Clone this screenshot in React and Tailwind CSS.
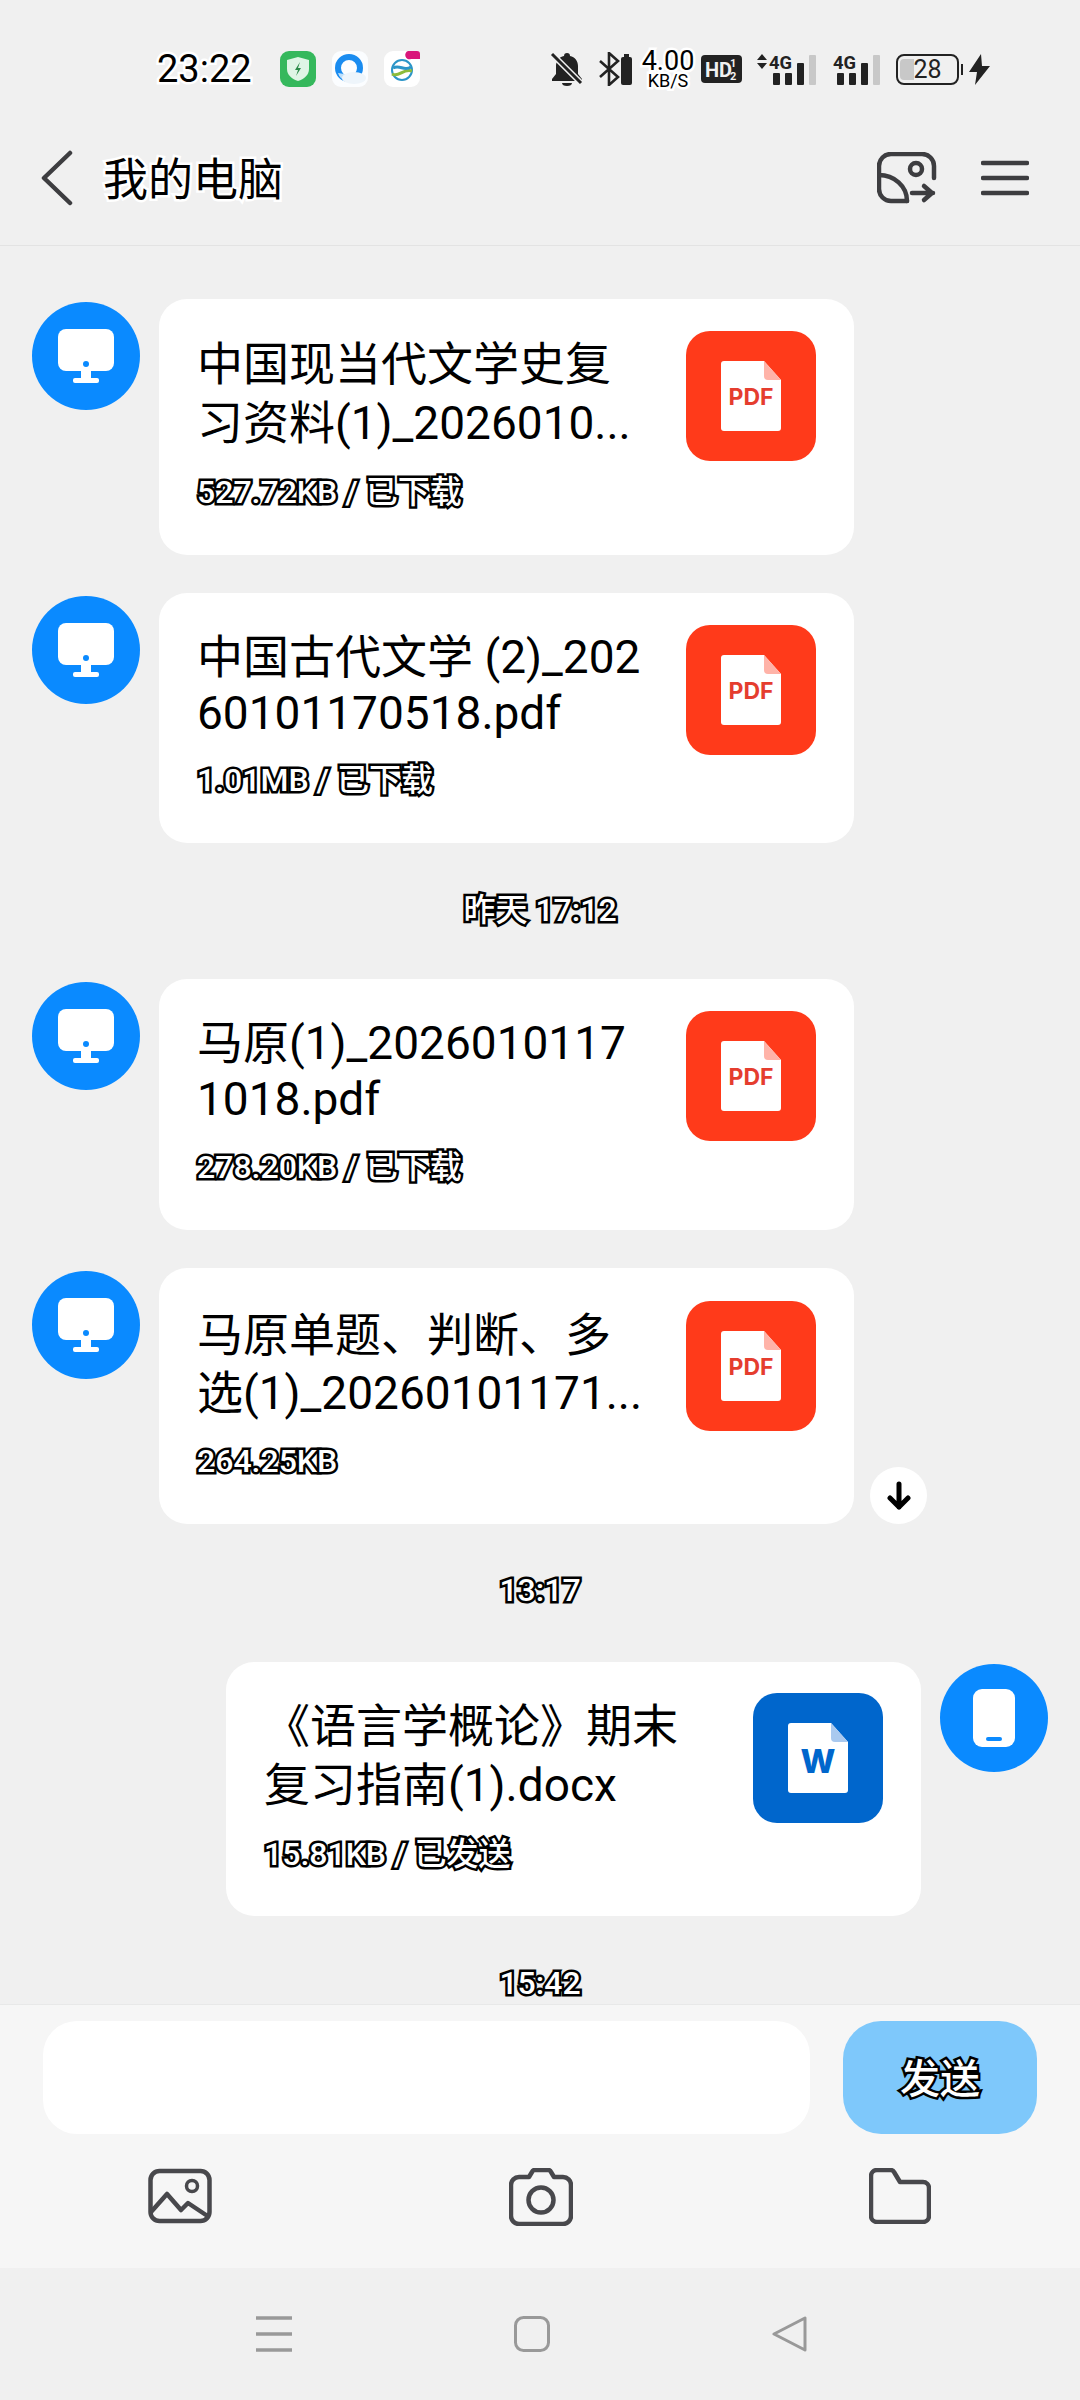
import React from 'react';

const FONT = "font-['Roboto','Noto_Sans_CJK_SC',sans-serif]";
const OUTLINE = "font-medium text-white [-webkit-text-stroke:5px_#000] [paint-order:stroke_fill]";
const HALO = "text-black [-webkit-text-stroke:5px_#fff] [paint-order:stroke_fill]";

function BellOff() {
    return (
        <svg width="34" height="36" viewBox="0 0 34 36">
            <path d="M17 2c2 0 3 1 3 3 5 1 8 5 8 10v8l4 5v2H2v-2l4-5v-8c0-5 3-9 8-10 0-2 1-3 3-3z" fill="#222" />
            <path d="M12 32h10c0 2-2 3-5 3s-5-1-5-3z" fill="#222" />
            <path d="M2 3l29 29" stroke="#f0f0f0" strokeWidth="6" />
            <path d="M2 3l29 29" stroke="#222" strokeWidth="3" />
        </svg>
    );
}

function BluetoothBattery() {
    return (
        <svg width="34" height="34" viewBox="0 0 34 34">
            <path d="M2 9l18 16-9 8V1l9 8L2 25" fill="none" stroke="#222" strokeWidth="2.6" />
            <rect x="23" y="5" width="11" height="28" rx="2" fill="#222" />
            <rect x="26" y="2" width="5" height="3" fill="#222" />
        </svg>
    );
}

function HdIcon() {
    return (
        <svg width="41" height="28" viewBox="0 0 41 28">
            <rect width="41" height="28" rx="4" fill="#222" />
            <text x="4" y="22" fontFamily="Roboto" fontWeight="700" fontSize="20" fill="#f0f0f0">HD</text>
            <text x="29" y="12" fontFamily="Roboto" fontWeight="700" fontSize="11" fill="#f0f0f0">1</text>
            <text x="29" y="25" fontFamily="Roboto" fontWeight="700" fontSize="11" fill="#f0f0f0">2</text>
        </svg>
    );
}

function SignalIcon({ arrows }) {
    return (
        <svg width={arrows ? 60 : 47} height="32" viewBox={arrows ? '0 0 60 32' : '13 0 47 32'}>
            {arrows && <path d="M1 7l5-6 5 6zM1 10l5 6 5-6z" fill="#222" />}
            <text x="13" y="16" fontFamily="Roboto" fontWeight="700" fontSize="18" fill="#222" textLength="23" lengthAdjust="spacingAndGlyphs">4G</text>
            <rect x="17" y="20" width="7" height="12" rx="1" fill="#222" />
            <rect x="29" y="20" width="7" height="12" rx="1" fill="#222" />
            <rect x="41" y="10" width="7" height="22" rx="1" fill="#222" />
            <rect x="53" y="2" width="7" height="30" rx="1" fill="#c8c8c8" />
        </svg>
    );
}

function BatteryIcon() {
    return (
        <div className="relative w-[68px] h-[31px]">
            <div className="absolute left-0 top-0 w-[63px] h-[31px] rounded-[8px] border-2 border-[#222] overflow-hidden flex items-center">
                <div className="w-[14px] h-[21px] bg-[#c8c8c8] ml-[2px] rounded-l-[4px]" />
            </div>
            <div className="absolute left-[65px] top-[10px] w-[2px] h-[11px] bg-[#222]" />
            <div className={`absolute left-0 w-[63px] top-0 h-[31px] flex items-center justify-center text-[25px] leading-none text-[#222] ${FONT}`}>28</div>
        </div>
    );
}

function Bolt() {
    return (
        <svg width="21" height="31" viewBox="0 0 21 31">
            <path d="M12 0L0 18h8L6 31 21 12h-8z" fill="#222" />
        </svg>
    );
}

function ShieldApp() {
    return (
        <svg width="36" height="36" viewBox="0 0 36 36">
            <rect width="36" height="36" rx="9" fill="#35b85c" />
            <path d="M18 6l11 3v9c0 6-5 10-11 12-6-2-11-6-11-12V9z" fill="#dff5e5" />
            <path d="M20 11l-5 8h3l-2 6 5-8h-3z" fill="#2a8a48" />
        </svg>
    );
}

function BrowserApp() {
    return (
        <svg width="36" height="36" viewBox="0 0 36 36">
            <rect width="36" height="36" rx="9" fill="#fbfdff" />
            <circle cx="17" cy="17" r="11" fill="none" stroke="#1a8cf0" strokeWidth="6" />
            <path d="M6 22a12 12 0 0 0 8 8l4-6z" fill="#bfe0fa" />
            <ellipse cx="22" cy="27" rx="12" ry="6" fill="#eef5fb" />
        </svg>
    );
}

function MobileApp() {
    return (
        <svg width="36" height="36" viewBox="0 0 36 36">
            <rect width="36" height="36" rx="9" fill="#fff" />
            <circle cx="18" cy="19" r="10" fill="none" stroke="#2b95c8" strokeWidth="2" />
            <path d="M8 23c7 4 11-6 20-3" fill="none" stroke="#8cbb3a" strokeWidth="3" />
            <path d="M9 17c7-4 11 4 18-1" fill="none" stroke="#2b95c8" strokeWidth="3" />
            <path d="M24 0h9a3 3 0 0 1 3 3v5H27a4 4 0 0 1-3-8z" fill="#d9167a" />
        </svg>
    );
}

function StatusBar() {
    return (
        <div className={`h-[120px] pt-[18px] pl-[157px] flex items-center ${FONT}`}>
            <span className={`text-[38px] leading-none w-[93px] ${HALO}`}>23:22</span>
            <div className="ml-[30px] flex gap-[16px]">
                <ShieldApp />
                <BrowserApp />
                <MobileApp />
            </div>
            <div className="ml-[130px]"><BellOff /></div>
            <div className="ml-[14px]"><BluetoothBattery /></div>
            <div className="ml-[9px] w-[54px] flex flex-col items-center">
                <span className={`text-[27px] leading-[23px] ${HALO} [-webkit-text-stroke:3px_#fff]`}>4.00</span>
                <span className={`text-[18px] leading-[16px] ${HALO} [-webkit-text-stroke:3px_#fff]`}>KB/S</span>
            </div>
            <div className="ml-[6px]"><HdIcon /></div>
            <div className="ml-[14px]"><SignalIcon arrows /></div>
            <div className="ml-[17px]"><SignalIcon /></div>
            <div className="ml-[16px]"><BatteryIcon /></div>
            <div className="ml-[5px]"><Bolt /></div>
        </div>
    );
}

function NavBar() {
    return (
        <div className="h-[126px] pb-[10px] border-b border-[#e3e3e3] flex items-center">
            <svg className="ml-[40px]" width="34" height="56" viewBox="0 0 34 56">
                <path d="M30 3L4 28l26 25" fill="none" stroke="#3d3d40" strokeWidth="4.5" strokeLinecap="round" strokeLinejoin="round" />
            </svg>
            <span className={`ml-[29px] mt-[5px] text-[45px] leading-none ${HALO} ${FONT}`}>我的电脑</span>
            <svg className="ml-auto" width="60" height="52" viewBox="0 0 60 52" fill="none" stroke="#3d3d40" strokeWidth="4.5" strokeLinecap="round">
                <path d="M57 26V14a12 12 0 0 0-12-12H14A12 12 0 0 0 2 14v23a12 12 0 0 0 12 12h16" />
                <path d="M2 23c15 0 28 11 28 26" />
                <circle cx="39" cy="17" r="6" />
                <path d="M35 41h21M47 34l8 7-8 7" strokeLinejoin="round" />
            </svg>
            <svg className="ml-[44px] mr-[51px]" width="48" height="36" viewBox="0 0 48 36" stroke="#3d3d40" strokeWidth="4.5" strokeLinecap="round">
                <path d="M2 3h44M2 18h44M2 33h44" />
            </svg>
        </div>
    );
}

function FileIcon({ type }) {
    const isPdf = type === 'pdf';
    return (
        <div className={`w-[130px] h-[130px] shrink-0 rounded-[24px] flex items-center justify-center ${isPdf ? 'bg-[#ff3a1a]' : 'bg-[#0066cc]'}`}>
            <svg width="60" height="70" viewBox="0 0 60 70">
                <path d="M3 0h40l17 19v48a3 3 0 0 1-3 3H3a3 3 0 0 1-3-3V3a3 3 0 0 1 3-3z" fill="#fff" />
                <path d="M43 0l17 19H47a4 4 0 0 1-4-4z" fill={isPdf ? '#ffb3a8' : '#a9c9ef'} />
                {isPdf ? (
                    <text x="30" y="44" textAnchor="middle" fontFamily="Inter" fontWeight="700" fontSize="23" fill="#e53d2f">PDF</text>
                ) : (
                    <text x="30" y="50" textAnchor="middle" fontFamily="Inter" fontWeight="800" fontSize="33" fill="#0066cc">W</text>
                )}
            </svg>
        </div>
    );
}

function PcAvatar() {
    return (
        <div className="w-[108px] h-[108px] mt-[3px] shrink-0 rounded-full bg-[#0a8aff] flex items-center justify-center">
            <svg width="56" height="54" viewBox="0 0 56 54">
                <rect width="56" height="42" rx="8" fill="#fff" />
                <circle cx="28" cy="35" r="3" fill="#0a8aff" />
                <rect x="23" y="42" width="10" height="8" fill="#fff" />
                <rect x="15" y="49" width="26" height="5" rx="2" fill="#fff" />
            </svg>
        </div>
    );
}

function PhoneAvatar() {
    return (
        <div className="w-[108px] h-[108px] mt-[2px] shrink-0 rounded-full bg-[#0a8aff] flex items-center justify-center">
            <svg width="42" height="58" viewBox="0 0 42 58">
                <rect width="42" height="58" rx="9" fill="#fff" />
                <rect x="13" y="48" width="16" height="4" rx="2" fill="#0a8aff" />
            </svg>
        </div>
    );
}

function FileCard({ file }) {
    return (
        <div className={`w-[695px] rounded-[28px] bg-white flex justify-between pl-[38px] pr-[38px] ${file.pad}`}>
            <div className={`min-w-0 ${FONT} whitespace-nowrap ${file.textTop}`}>
                <div className={`text-[46px] text-black ${file.lh1}`}>{file.line1}</div>
                <div className={`text-[46px] text-black ${file.lh2}`}>{file.line2}</div>
                <div className={`text-[32px] leading-[40px] ${OUTLINE} ${file.subTop}`}>{file.sub}</div>
            </div>
            <FileIcon type={file.type} />
        </div>
    );
}

function TimeLabel({ className, children }) {
    return (
        <div className={`flex justify-center text-[32px] leading-[40px] ${OUTLINE} ${FONT} ${className}`}>
            {children}
        </div>
    );
}

const files = [
    { line1: '中国现当代文学史复', line2: '习资料(1)_2026010...', sub: '527.72KB / 已下载', type: 'pdf', lh1: 'leading-[57px]', lh2: 'leading-[60px]', pad: 'pt-[32px] h-[256px]', textTop: 'mt-[5px]', subTop: 'mt-[19px]' },
    { line1: '中国古代文学 (2)_202', line2: '60101170518.pdf', sub: '1.01MB / 已下载', type: 'pdf', lh1: 'leading-[58px]', lh2: 'leading-[55px]', pad: 'pt-[32px] h-[250px]', textTop: 'mt-[3px]', subTop: 'mt-[19px]' },
    { line1: '马原(1)_2026010117', line2: '1018.pdf', sub: '278.20KB / 已下载', type: 'pdf', lh1: 'leading-[57px]', lh2: 'leading-[55px]', pad: 'pt-[32px] h-[251px]', textTop: 'mt-[4px]', subTop: 'mt-[20px]' },
    { line1: '马原单题、判断、多', line2: '选(1)_20260101171...', sub: '264.25KB', type: 'pdf', lh1: 'leading-[57px]', lh2: 'leading-[58px]', pad: 'pt-[33px] h-[256px]', textTop: 'mt-[6px]', subTop: 'mt-[19px]' },
];

function InputBar() {
    return (
        <div className="h-[264px] bg-[#f6f6f6] border-t border-[#e8e8e8] px-[43px] pt-[16px]">
            <div className="flex gap-[33px]">
                <div className="w-[767px] h-[113px] rounded-[34px] bg-white" />
                <div className={`w-[194px] h-[113px] rounded-[38px] bg-[#7ec8fb] flex items-center justify-center text-[40px] pt-[4px] ${OUTLINE} ${FONT}`}>发送</div>
            </div>
            <div className="mt-[34px] flex justify-between pl-[105px] pr-[106px]">
                <svg width="64" height="56" viewBox="0 0 64 56" fill="none" stroke="#48484c" strokeWidth="4.5" strokeLinejoin="round">
                    <rect x="2.5" y="3" width="59" height="50" rx="9" />
                    <path d="M3 44l16-18 14 16 7-7 21 14" />
                    <circle cx="44" cy="18" r="5.5" strokeWidth="3.5" />
                </svg>
                <svg width="64" height="58" viewBox="0 0 64 58" fill="none" stroke="#48484c" strokeWidth="4.5" strokeLinejoin="round">
                    <path d="M20 9l3-5a3 3 0 0 1 3-2h13a3 3 0 0 1 3 2l3 5h9a8 8 0 0 1 8 8v31a8 8 0 0 1-8 8H10a8 8 0 0 1-8-8V17a8 8 0 0 1 8-8z" />
                    <circle cx="32" cy="32" r="12.5" />
                </svg>
                <svg width="62" height="56" viewBox="0 0 62 56" fill="none" stroke="#48484c" strokeWidth="4.5" strokeLinejoin="round">
                    <path d="M2 8a6 6 0 0 1 6-6h14a4 4 0 0 1 3 2l6 10h23a6 6 0 0 1 6 6v28a6 6 0 0 1-6 6H8a6 6 0 0 1-6-6z" />
                </svg>
            </div>
        </div>
    );
}

function SystemNav() {
    return (
        <div className="h-[132px] pt-[48px] pl-[256px] flex items-start bg-[#f0f0f0]">
            <svg width="36" height="36" viewBox="0 0 36 36" stroke="#999" strokeWidth="3.5">
                <path d="M0 2h36M0 18h36M0 34h36" />
            </svg>
            <svg className="ml-[222px]" width="36" height="36" viewBox="0 0 36 36" fill="none" stroke="#999" strokeWidth="3">
                <rect x="1.5" y="1.5" width="33" height="33" rx="8" />
            </svg>
            <svg className="ml-[222px]" width="36" height="36" viewBox="0 0 36 36" fill="none" stroke="#999" strokeWidth="3" strokeLinejoin="round">
                <path d="M33 2v32L2 18z" />
            </svg>
        </div>
    );
}

export default function App() {
    return (
        <div className="w-[1080px] h-[2400px] bg-[#f0f0f0] flex flex-col overflow-hidden">
            <StatusBar />
            <NavBar />

            {/* Chat */}
            <div className="flex-1 min-h-0 overflow-hidden pt-[53px]">
                {files.map((file, i) => (
                    <React.Fragment key={file.line1}>
                        {i === 2 && <TimeLabel className="h-[136px] pt-[47px]">昨天 17:12</TimeLabel>}
                        <div className={`relative flex pl-[32px] gap-[19px] ${i === 0 || i === 2 ? '' : 'mt-[38px]'}`}>
                            <PcAvatar />
                            <FileCard file={file} />
                            {i === 3 && (
                                <div className="absolute left-[870px] bottom-0 w-[57px] h-[57px] rounded-full bg-white flex items-center justify-center">
                                    <svg width="24" height="30" viewBox="0 0 24 30" fill="none" stroke="#000" strokeWidth="5" strokeLinecap="round" strokeLinejoin="round">
                                        <path d="M12 3v23M3 17l9 9 9-9" />
                                    </svg>
                                </div>
                            )}
                        </div>
                    </React.Fragment>
                ))}

                <TimeLabel className="h-[138px] pt-[46px]">13:17</TimeLabel>

                <div className="flex justify-end pr-[32px] gap-[19px]">
                    <FileCard
                        file={{
                            line1: '《语言学概论》期末',
                            line2: '复习指南(1).docx',
                            sub: '15.81KB / 已发送',
                            type: 'word',
                            lh1: 'leading-[58px]',
                            lh2: 'leading-[60px]',
                            pad: 'pt-[31px] h-[254px]',
                            textTop: 'mt-[4px]',
                            subTop: 'mt-[19px]',
                        }}
                    />
                    <PhoneAvatar />
                </div>

                <TimeLabel className="mt-[47px]">15:42</TimeLabel>
            </div>

            <InputBar />
            <SystemNav />
        </div>
    );
}
